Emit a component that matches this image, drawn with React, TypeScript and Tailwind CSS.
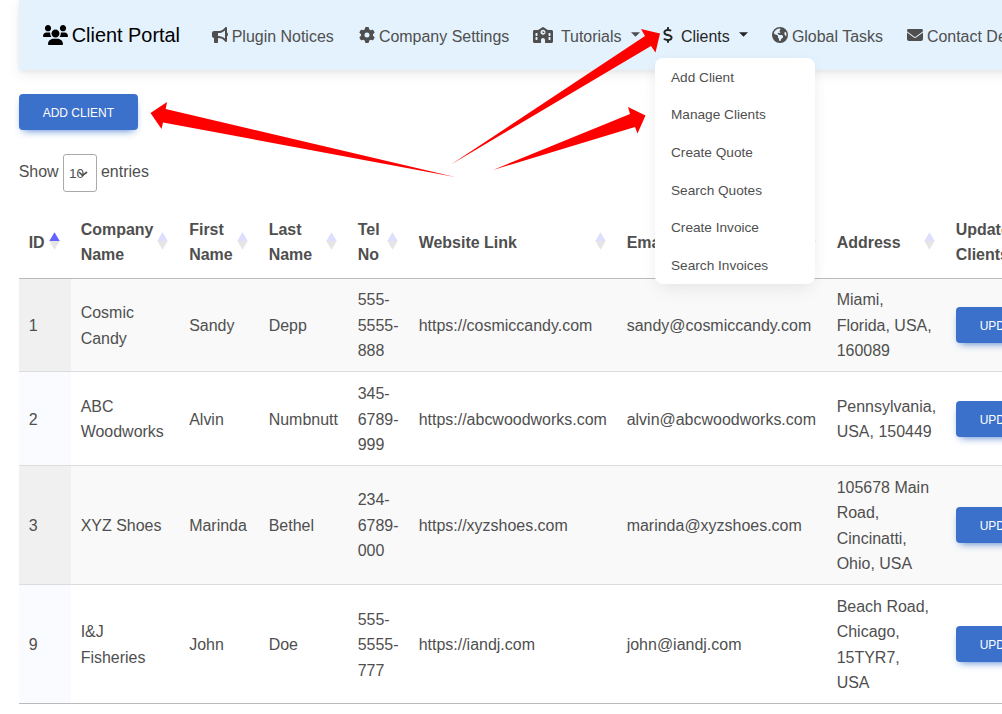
import type { ReactNode } from "react";
import { FaDollarSign, FaEarthAmericas, FaEnvelope, FaGear } from "react-icons/fa6";

type Sort = "none" | "both" | "asc";

const columns: { title: string[]; sort: Sort }[] = [
  { title: ["ID"], sort: "asc" },
  { title: ["Company", "Name"], sort: "both" },
  { title: ["First", "Name"], sort: "both" },
  { title: ["Last", "Name"], sort: "both" },
  { title: ["Tel", "No"], sort: "both" },
  { title: ["Website Link"], sort: "both" },
  { title: ["Email"], sort: "both" },
  { title: ["Address"], sort: "both" },
  { title: ["Update", "Clients"], sort: "none" },
];

const clients: string[][][] = [
  [["1"], ["Cosmic", "Candy"], ["Sandy"], ["Depp"], ["555-", "5555-", "888"], ["https://cosmiccandy.com"], ["sandy@cosmiccandy.com"], ["Miami,", "Florida, USA,", "160089"]],
  [["2"], ["ABC", "Woodworks"], ["Alvin"], ["Numbnutt"], ["345-", "6789-", "999"], ["https://abcwoodworks.com"], ["alvin@abcwoodworks.com"], ["Pennsylvania,", "USA, 150449"]],
  [["3"], ["XYZ Shoes"], ["Marinda"], ["Bethel"], ["234-", "6789-", "000"], ["https://xyzshoes.com"], ["marinda@xyzshoes.com"], ["105678 Main", "Road,", "Cincinatti,", "Ohio, USA"]],
  [["9"], ["I&J", "Fisheries"], ["John"], ["Doe"], ["555-", "5555-", "777"], ["https://iandj.com"], ["john@iandj.com"], ["Beach Road,", "Chicago,", "15TYR7,", "USA"]],
];

const menuItems = ["Add Client", "Manage Clients", "Create Quote", "Search Quotes", "Create Invoice", "Search Invoices"];

const grid = "grid grid-cols-[52px_108.5px_79.5px_89px_61px_208px_210px_119px_130px]";

function UsersIcon({ className }: { className: string }) {
  return (
    <svg className={className} viewBox="0 0 640 512" fill="currentColor">
      <path d="M319.9 320c57.41 0 103.1-46.56 103.1-104c0-57.44-46.54-104-103.1-104c-57.41 0-103.1 46.56-103.1 104C215.9 273.4 262.4 320 319.9 320zM369.9 352H270.1C191.6 352 128 411.7 128 485.3C128 500.1 140.7 512 156.4 512h327.2C499.3 512 512 500.1 512 485.3C512 411.7 448.4 352 369.9 352zM512 160c44.18 0 80-35.82 80-80S556.2 0 512 0c-44.18 0-80 35.82-80 80S467.8 160 512 160zM183.9 216c0-5.449 .9824-10.63 1.609-15.91C174.6 194.1 162.6 192 149.9 192H88.08C39.44 192 0 233.8 0 285.3C0 295.6 7.887 304 17.62 304h199.5C196.7 280.2 183.9 249.7 183.9 216zM128 160c44.18 0 80-35.82 80-80S172.2 0 128 0C83.82 0 48 35.82 48 80S83.82 160 128 160zM551.9 192h-61.84c-12.8 0-24.88 3.037-35.86 8.24C454.8 205.5 455.8 210.6 455.8 216c0 33.71-12.78 64.21-33.16 88h199.7C632.1 304 640 295.6 640 285.3C640 233.8 600.6 192 551.9 192z" />
    </svg>
  );
}

function BullhornIcon({ className }: { className: string }) {
  return (
    <svg className={className} viewBox="0 0 512 512" fill="currentColor">
      <path d="M480 179.6C498.6 188.4 512 212.1 512 240C512 267.9 498.6 291.6 480 300.4V448C480 460.9 472.2 472.6 460.2 477.6C448.3 482.5 434.5 479.8 425.4 470.6L381.7 426.1C333.7 378.1 268.6 352 200.7 352H192V480C192 497.7 177.7 512 160 512H96C78.33 512 64 497.7 64 480V352C28.65 352 0 323.3 0 288V192C0 156.7 28.65 128 64 128H200.7C268.6 128 333.7 101 381.7 53.02L425.4 9.373C434.5 .2215 448.3-2.516 460.2 2.437C472.2 7.39 480 19.06 480 32V179.6zM200.7 192H192V288H200.7C280.5 288 357.2 317.8 416 371.3V108.7C357.2 162.2 280.5 192 200.7 192z" />
    </svg>
  );
}

function SchoolIcon({ className }: { className: string }) {
  return (
    <svg className={className} viewBox="0 0 640 512" fill="currentColor" fillRule="evenodd">
      <path d="M476.8 96H592C618.5 96 640 117.5 640 144V464C640 490.5 618.5 512 592 512H384V416C384 380.7 355.3 352 320 352C284.7 352 256 380.7 256 416V512H48C21.49 512 0 490.5 0 464V144C0 117.5 21.49 96 48 96H163.2L302.2 5.374C312.1-1.791 327-1.791 337.8 5.374L476.8 96zM96 192C87.16 192 80 199.2 80 208V272C80 280.8 87.16 288 96 288H128C136.8 288 144 280.8 144 272V208C144 199.2 136.8 192 128 192H96zM496 272C496 280.8 503.2 288 512 288H544C552.8 288 560 280.8 560 272V208C560 199.2 552.8 192 544 192H512C503.2 192 496 199.2 496 208V272zM96 320C87.16 320 80 327.2 80 336V400C80 408.8 87.16 416 96 416H128C136.8 416 144 408.8 144 400V336C144 327.2 136.8 320 128 320H96zM496 400C496 408.8 503.2 416 512 416H544C552.8 416 560 408.8 560 400V336C560 327.2 552.8 320 544 320H512C503.2 320 496 327.2 496 336V400zM320 88C275.8 88 240 123.8 240 168C240 212.2 275.8 248 320 248C364.2 248 400 212.2 400 168C400 123.8 364.2 88 320 88z" />
      <path d="M320 128C328.8 128 336 135.2 336 144V160H352C360.8 160 368 167.2 368 176C368 184.8 360.8 192 352 192H320C311.2 192 304 184.8 304 176V144C304 135.2 311.2 128 320 128z" />
    </svg>
  );
}

function Lines({ lines }: { lines: string[] }) {
  return (
    <div>
      {lines.map((line) => (
        <div key={line}>{line}</div>
      ))}
    </div>
  );
}

function SortMark({ sort }: { sort: Sort }) {
  if (sort === "none") return null;
  return (
    <svg className="-mt-[3px] h-[18px] w-[11px] shrink-0" viewBox="0 0 11 18">
      <path d="M5.5 0.3 L10.7 9 H0.3 Z" fill={sort === "asc" ? "#6464ff" : "#dedeff"} />
      <path d="M0.3 9 H10.7 L5.5 17.7 Z" fill="#e5e5e5" />
    </svg>
  );
}

function Caret() {
  return (
    <svg className="h-[5px] w-[9px] shrink-0" viewBox="0 0 9 5">
      <path d="M0 0.2 H9 L4.5 4.8 Z" fill="currentColor" />
    </svg>
  );
}

function NavItem({ className, children }: { className: string; children: ReactNode }) {
  return <div className={`flex shrink-0 items-center ${className}`}>{children}</div>;
}

function BlueButton({ className, children }: { className: string; children: ReactNode }) {
  return (
    <button className={`h-9 shrink-0 rounded bg-[#3b71ca] pt-[3px] text-left text-[12px] font-medium text-white shadow-[0_4px_9px_-4px_#3b71ca] ${className}`}>
      {children}
    </button>
  );
}

export default function App() {
  return (
    <div className="relative h-[714px] w-[1002px] overflow-hidden bg-white pl-[18.7px] font-['Liberation_Sans',Arial,sans-serif] text-[15.97px] leading-[25.5px] text-[#4f4f4f]">
      <nav className="flex h-[70px] w-[1100px] items-center bg-[#e3f2fd] pl-6 whitespace-nowrap shadow-[0_4px_12px_0_rgba(0,0,0,0.07),0_2px_4px_rgba(0,0,0,0.05)]">
        <NavItem className="w-[169px] text-[19.9px] text-black">
          <UsersIcon className="mr-1 h-5 w-[25px]" />
          <span className="pt-0.5">Client Portal</span>
        </NavItem>
        <NavItem className="w-[147.2px] pt-[3px]">
          <BullhornIcon className="mr-1 -mt-[3px] size-4" />
          Plugin Notices
        </NavItem>
        <NavItem className="w-[174px] pt-[3px]">
          <FaGear className="mr-1 -mt-[3px] size-4" />
          Company Settings
        </NavItem>
        <NavItem className="w-[130px] pt-[3px]">
          <SchoolIcon className="mr-2 -mt-[3px] h-4 w-5" />
          Tutorials
          <span className="-mt-[5px] ml-[9px]"><Caret /></span>
        </NavItem>
        <NavItem className="w-[109px] pt-[3px] text-[#262626]">
          <FaDollarSign className="mr-2 -mt-[3px] h-4 w-[10px]" />
          Clients
          <span className="-mt-[5px] ml-[9px]"><Caret /></span>
        </NavItem>
        <NavItem className="w-[135px] pt-[3px]">
          <FaEarthAmericas className="mr-1 -mt-[3px] size-4" />
          Global Tasks
        </NavItem>
        <NavItem className="w-[170px] pt-[3px]">
          <FaEnvelope className="mr-1 -mt-[3px] size-4" />
          Contact Developer
        </NavItem>
      </nav>

      <BlueButton className="mt-6 block w-[119px] pl-6">ADD CLIENT</BlueButton>

      <div className="mt-6 flex h-[38px] items-center">
        <span className="-mt-[2px] w-[44.3px]">Show</span>
        <div className="flex h-[38px] w-[34px] items-center rounded-[3px] border border-[#aaa] pl-[5px] text-[13.5px]">
          <span className="w-[9px] pt-px whitespace-nowrap">10</span>
          <svg className="mt-px h-[6px] w-[10px]" viewBox="0 0 10 6">
            <path d="M1 1 L4.5 4.5 L9 1" fill="none" stroke="#4f4f4f" strokeWidth="1.6" />
          </svg>
        </div>
        <span className="-mt-[2px] ml-1">entries</span>
      </div>

      <div className="mt-[14px] w-[1057px]">
        <div className={`${grid} h-[72.9px] border-b border-[#bbb] pt-px font-bold`}>
          {columns.map((c) => (
            <div key={c.title.join(" ")} className="flex items-center justify-between pr-[11px] pl-2.5">
              <Lines lines={c.title} />
              <SortMark sort={c.sort} />
            </div>
          ))}
        </div>
        {clients.map((row, r) => (
          <div
            key={row[0][0]}
            className={`${grid} border-b ${r === 3 ? "border-[#bbb]" : "border-[#dcdcdc]"} ${r % 2 === 0 ? "bg-[#f9f9f9]" : "bg-white"}`}
          >
            {row.map((lines, i) => (
              <div
                key={i}
                className={`flex items-center pt-[8.6px] pb-[7.5px] pl-2.5 ${i === 0 ? (r % 2 === 0 ? "bg-[#f0f0f0]" : "bg-[#fafbff]") : ""}`}
              >
                <Lines lines={lines} />
              </div>
            ))}
            <div className="flex items-center pl-2.5">
              <BlueButton className="w-[98px] pl-6">UPDATE</BlueButton>
            </div>
          </div>
        ))}
      </div>

      <div className="absolute top-[58px] left-[655px] flex w-[160px] flex-col rounded-lg bg-white text-[13.65px] shadow-[0_2px_15px_-3px_rgba(0,0,0,0.07),0_10px_20px_-2px_rgba(0,0,0,0.04)]">
        {menuItems.map((item) => (
          <div key={item} className="flex h-[37.7px] items-center pt-[1.2px] pl-4">
            {item}
          </div>
        ))}
      </div>

      <svg className="pointer-events-none absolute top-0 left-0 h-[714px] w-[1002px]" viewBox="0 0 1002 714" fill="#ff0000">
        <path d="M150.5 113 L167 102 L165.7 109 L455 177 L163 122.5 L161.5 129 Z" />
        <path d="M660 33.5 L641 29 L645 36 L451 164.5 L651 46 L655.5 52.5 Z" />
        <path d="M645.5 115.5 L628 107 L630 114 L493 170 L635 127 L637.5 133.5 Z" />
      </svg>
    </div>
  );
}
